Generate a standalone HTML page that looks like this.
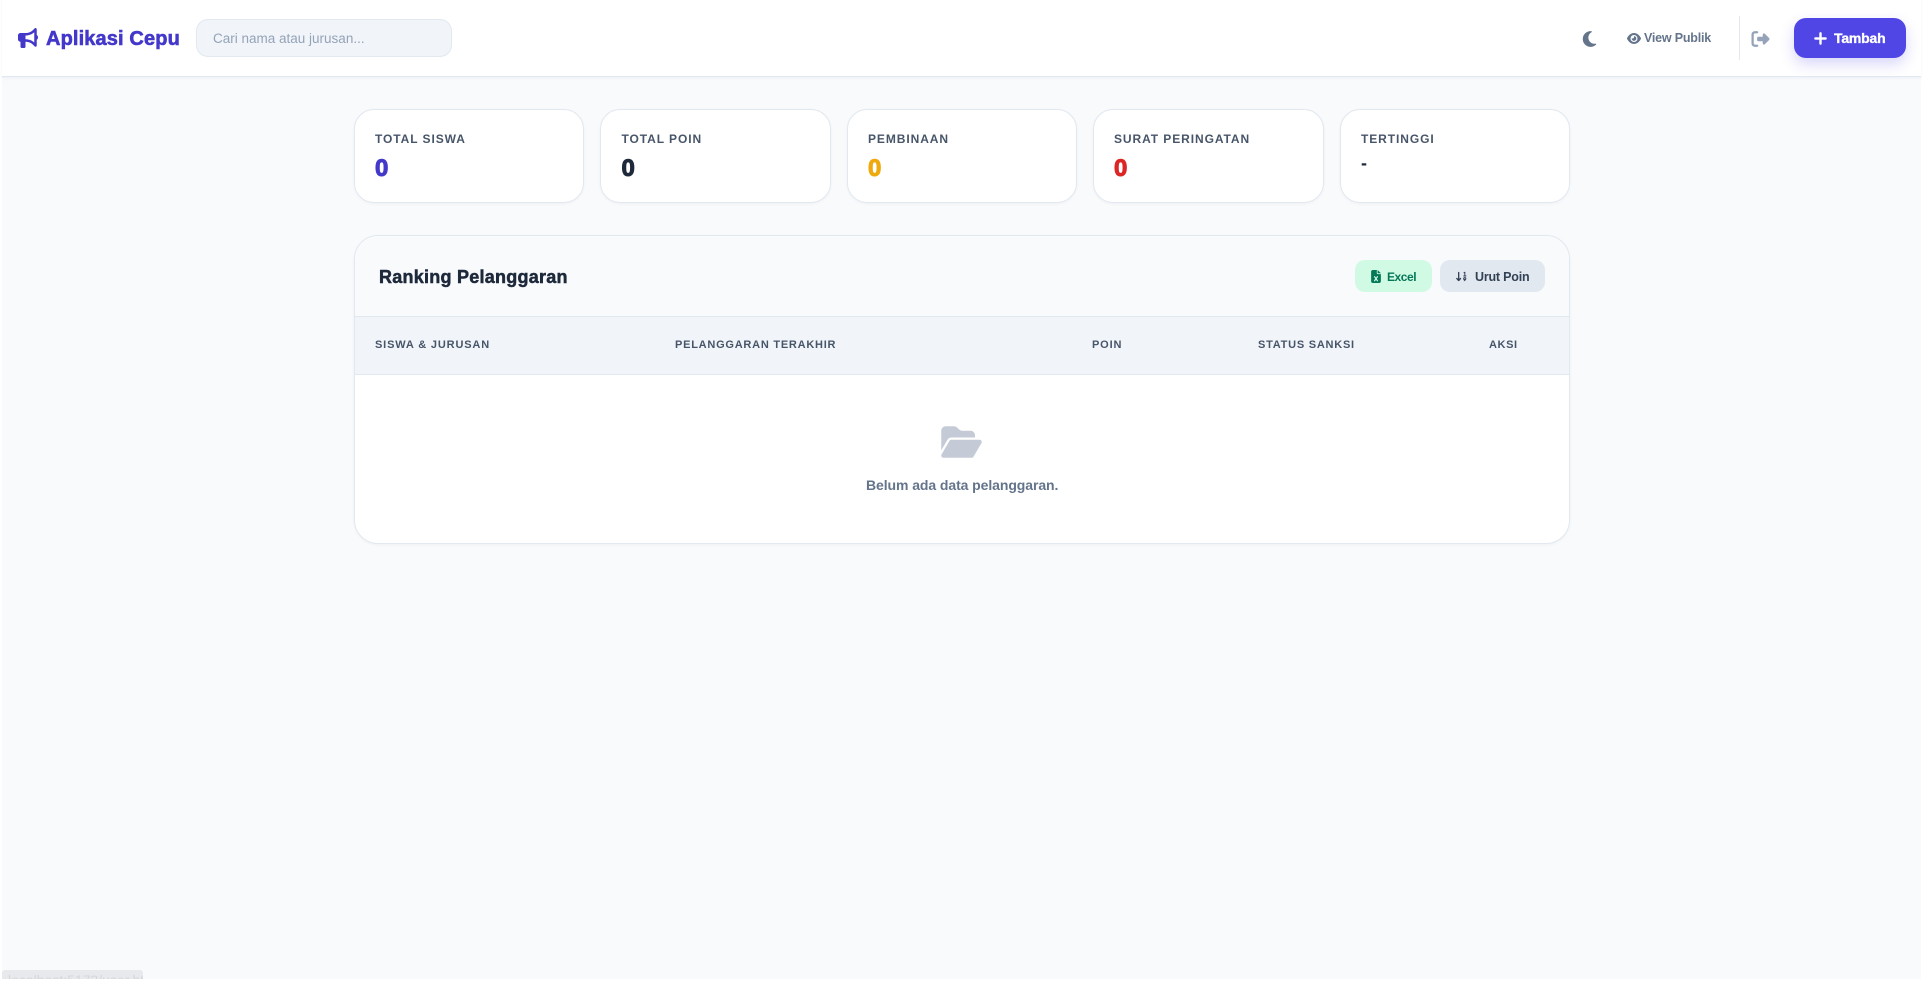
<!DOCTYPE html>
<html lang="id">
<head>
<meta charset="utf-8">
<title>Aplikasi Cepu</title>
<style>
html,body{margin:0;padding:0;background:#fff}
body{width:1923px;height:982px;position:relative;overflow:hidden;font-family:"Liberation Sans",sans-serif}
div,span,svg{position:absolute;box-sizing:border-box}
.t{white-space:nowrap;line-height:1}
#page{left:2px;top:0;width:1919px;height:979px;background:#f8fafc}
#nav{left:2px;top:0;width:1919px;height:77px;background:#fff;border-bottom:1px solid #e2e8f0;box-shadow:0 1px 2px rgba(226,232,240,.5)}
.card{top:109px;height:94px;background:#fff;border:1px solid #e2e8f0;border-radius:20px;box-shadow:0 1px 3px rgba(15,23,42,.04)}
.lb{top:133px;font-size:12px;font-weight:700;color:#475569;letter-spacing:.92px}
.val{top:157px;font-size:24px;font-weight:700;-webkit-text-stroke:1px currentColor}
.th{top:340px;font-size:11px;font-weight:700;color:#475569;letter-spacing:.85px}
</style>
</head>
<body>
<div id="page"></div>
<div id="nav"></div>

<svg style="left:18px;top:28px;width:20px;height:20px" viewBox="0 0 512 512" fill="#4338ca"><path d="M480 32c0-12.900-7.800-24.600-19.800-29.600s-25.700-2.200-34.900 6.900L381.700 53c-48 48-113.100 75-181 75H192 160 64c-35.300 0-64 28.700-64 64v96c0 35.300 28.700 64 64 64l0 128c0 17.700 14.300 32 32 32h64c17.700 0 32-14.300 32-32V352l8.700 0c67.900 0 133 27 181 75l43.600 43.600c9.200 9.200 22.900 11.900 34.900 6.900s19.800-16.600 19.800-29.600V300.400c18.600-8.800 32-32.500 32-60.400s-13.400-51.600-32-60.400V32zm-64 76.700V240 371.300C357.200 317.800 280.500 288 200.700 288H192V192h8.700c79.800 0 156.500-29.800 215.300-83.300z"/></svg>
<span class="t" style="left:46px;top:29px;font-size:20px;font-weight:700;color:#4338ca;-webkit-text-stroke:.6px #4338ca;letter-spacing:.13px">Aplikasi Cepu</span>

<div style="left:196px;top:19px;width:256px;height:38px;background:#f1f5f9;border:1px solid #e2e8f0;border-radius:12px"></div>
<span class="t" style="left:213px;top:31.500px;font-size:13.500px;color:#94a3b8">Cari nama atau jurusan...</span>

<svg style="left:1582px;top:30px;width:15px;height:18px" viewBox="0 0 384 512" fill="#64748b"><path d="M223.500 32C100 32 0 132.300 0 256S100 480 223.500 480c60.600 0 115.500-24.200 155.800-63.400c5-4.900 6.300-12.500 3.100-18.700s-10.100-9.700-17-8.500c-9.800 1.700-19.800 2.600-30.100 2.600c-96.900 0-175.500-78.800-175.500-176c0-65.800 36-123.100 89.300-153.300c6.100-3.500 9.200-10.500 7.700-17.300s-7.300-11.900-14.300-12.500c-6.300-.5-12.600-.8-19-.8z"/></svg>
<svg style="left:1627px;top:31.500px;width:14px;height:13px" viewBox="0 0 576 512" fill="#64748b"><path d="M288 32c-80.800 0-145.500 36.800-192.600 80.600C48.600 156 17.300 208 2.500 243.700c-3.300 7.900-3.300 16.700 0 24.600C17.300 304 48.600 356 95.400 399.400C142.500 443.200 207.200 480 288 480s145.500-36.800 192.600-80.600c46.800-43.500 78.100-95.400 93-131.100c3.300-7.900 3.300-16.700 0-24.600c-14.900-35.700-46.200-87.700-93-131.100C433.500 68.800 368.800 32 288 32zM144 256a144 144 0 1 1 288 0 144 144 0 1 1 -288 0zm144-64c0 35.300-28.700 64-64 64c-7.100 0-13.900-1.200-20.300-3.300c-5.500-1.800-11.900 1.600-11.700 7.400c.3 6.900 1.300 13.800 3.200 20.700c13.700 51.200 66.400 81.600 117.600 67.900s81.600-66.400 67.900-117.600c-11.100-41.500-47.800-69.400-88.600-71.100c-5.800-.2-9.200 6.100-7.400 11.700c2.100 6.400 3.300 13.200 3.300 20.300z"/></svg>
<span class="t" style="left:1644px;top:32px;font-size:12.500px;font-weight:700;color:#64748b;letter-spacing:-.2px">View Publik</span>
<div style="left:1739px;top:16px;width:1px;height:44px;background:#e2e8f0"></div>
<svg style="left:1751px;top:30px;width:19px;height:18px" viewBox="0 0 512 512" fill="#94a3b8"><path d="M377.900 105.900L500.700 228.700c7.200 7.200 11.300 17.100 11.300 27.300s-4.100 20.100-11.300 27.300L377.900 406.100c-6.400 6.400-15 9.900-24 9.900c-18.700 0-33.900-15.200-33.900-33.900l0-62.100-128 0c-17.700 0-32-14.300-32-32l0-64c0-17.700 14.300-32 32-32l128 0 0-62.100c0-18.700 15.200-33.900 33.900-33.900c9 0 17.600 3.600 24 9.900zM160 96L96 96c-17.700 0-32 14.300-32 32l0 256c0 17.700 14.300 32 32 32l64 0c17.700 0 32 14.300 32 32s-14.300 32-32 32l-64 0c-53 0-96-43-96-96L0 128C0 75 43 32 96 32l64 0c17.700 0 32 14.300 32 32s-14.300 32-32 32z"/></svg>
<div style="left:1794px;top:18px;width:112px;height:40px;background:#4f46e5;border-radius:12px;box-shadow:0 6px 14px rgba(79,70,229,.22)"></div>
<svg style="left:1814px;top:31px;width:13px;height:15px" viewBox="0 0 448 512" fill="#fff" stroke="#fff" stroke-width="20"><path d="M256 80c0-17.700-14.300-32-32-32s-32 14.300-32 32V224H48c-17.700 0-32 14.300-32 32s14.300 32 32 32H192V432c0 17.700 14.300 32 32 32s32-14.300 32-32V288H400c17.700 0 32-14.300 32-32s-14.300-32-32-32H256V80z"/></svg>
<span class="t" style="left:1834px;top:31px;font-size:14px;font-weight:700;color:#fff;letter-spacing:-.2px;-webkit-text-stroke:.3px #fff">Tambah</span>

<div class="card" style="left:354px;width:230px"></div>
<div class="card" style="left:600px;width:231px"></div>
<div class="card" style="left:847px;width:230px"></div>
<div class="card" style="left:1093px;width:231px"></div>
<div class="card" style="left:1340px;width:230px"></div>

<span class="t lb" style="left:375px">TOTAL SISWA</span>
<span class="t val" style="left:375px;color:#4338ca">0</span>
<span class="t lb" style="left:621.500px">TOTAL POIN</span>
<span class="t val" style="left:621.500px;color:#1e293b">0</span>
<span class="t lb" style="left:868px">PEMBINAAN</span>
<span class="t val" style="left:868px;color:#f0a90c">0</span>
<span class="t lb" style="left:1114px">SURAT PERINGATAN</span>
<span class="t val" style="left:1114px;color:#dc2626">0</span>
<span class="t lb" style="left:1361px">TERTINGGI</span>
<span class="t" style="left:1361px;top:154px;font-size:18px;font-weight:700;color:#1e293b">-</span>

<div style="left:354px;top:235px;width:1216px;height:309px;background:#fff;border:1px solid #e2e8f0;border-radius:24px;overflow:hidden;box-shadow:0 1px 3px rgba(15,23,42,.04)">
  <div style="left:0;top:0;width:100%;height:81px;background:#f8fafc;border-bottom:1px solid #e2e8f0"></div>
  <div style="left:0;top:81px;width:100%;height:58px;background:#f1f5f9;border-bottom:1px solid #e2e8f0"></div>
</div>

<span class="t" style="left:379px;top:268px;font-size:18px;font-weight:700;color:#1e293b;-webkit-text-stroke:.5px #1e293b;letter-spacing:.25px">Ranking Pelanggaran</span>

<div style="left:1355px;top:260px;width:77px;height:32px;background:#d1fae5;border-radius:10px"></div>
<svg style="left:1371px;top:270px;width:10px;height:13px" viewBox="0 0 384 512" fill="#047857"><path d="M64 0C28.700 0 0 28.700 0 64V448c0 35.300 28.700 64 64 64H320c35.300 0 64-28.700 64-64V160H256c-17.700 0-32-14.300-32-32V0H64zM256 0V128H384L256 0zM155.700 250.200L192 302.100l36.300-51.900c7.600-10.900 22.600-13.500 33.400-5.900s13.500 22.600 5.900 33.400L221.300 344l46.400 66.200c7.600 10.900 5 25.800-5.900 33.400s-25.800 5-33.400-5.900L192 385.800l-36.300 51.900c-7.600 10.900-22.600 13.500-33.400 5.900s-13.500-22.600-5.900-33.400L162.700 344l-46.400-66.200c-7.600-10.900-5-25.800 5.900-33.400s25.800-5 33.400 5.900z"/></svg>
<span class="t" style="left:1387px;top:270.500px;font-size:12px;font-weight:700;color:#047857;letter-spacing:-.45px">Excel</span>

<div style="left:1440px;top:260px;width:105px;height:32px;background:#e2e8f0;border-radius:10px"></div>
<svg style="left:1456px;top:270px;width:12px;height:13px" viewBox="0 0 576 512" fill="#334155"><path d="M151.600 469.600C145.500 476.200 137 480 128 480s-17.500-3.800-23.600-10.400l-88-96c-11.900-13-11.100-33.300 2-45.200s33.300-11.100 45.200 2L96 365.700V64c0-17.700 14.300-32 32-32s32 14.300 32 32V365.700l32.400-35.400c11.900-13 32.200-13.900 45.200-2s13.900 32.200 2 45.200l-88 96z"/><path d="M400 32h48v176h48v48H352v-48h48V96h-40V64z"/><path fill-rule="evenodd" d="M424 288a72 72 0 0 1 72 72c0 50-40 90-80 120h-60l50-48a72 72 0 1 1 18-144zm0 48a24 24 0 1 0 0 48 24 24 0 0 0 0-48z"/></svg>
<span class="t" style="left:1475px;top:270.500px;font-size:12.500px;font-weight:700;color:#334155;letter-spacing:-.2px">Urut Poin</span>

<span class="t th" style="left:375px">SISWA &amp; JURUSAN</span>
<span class="t th" style="left:675px;letter-spacing:.76px">PELANGGARAN TERAKHIR</span>
<span class="t th" style="left:1092px">POIN</span>
<span class="t th" style="left:1258px;letter-spacing:.76px">STATUS SANKSI</span>
<span class="t th" style="left:1489px;letter-spacing:.6px">AKSI</span>

<svg style="left:941px;top:424px;width:41px;height:36px" viewBox="0 0 576 512" fill="#c5cbd6"><path d="M88.700 223.800L0 375.800V96C0 60.700 28.700 32 64 32H181.500c17 0 33.300 6.700 45.300 18.700l26.500 26.500c12 12 28.300 18.700 45.300 18.700H416c35.300 0 64 28.700 64 64v32H144c-22.800 0-43.800 12.100-55.300 31.800zm27.600 16.100C122.100 230 132.600 224 144 224H544c11.500 0 22 6.100 27.700 16.100s5.700 22.200-.1 32.100l-112 192C453.900 474 443.400 480 432 480H32c-11.500 0-22-6.100-27.700-16.100s-5.700-22.200 .1-32.100l112-192z"/></svg>
<span class="t" style="left:866px;top:478px;font-size:14px;font-weight:700;color:#64748b;letter-spacing:-.08px">Belum ada data pelanggaran.</span>

<div style="left:2px;top:970px;width:141px;height:9px;background:#e8e9ec;border-radius:3px 3px 0 0;overflow:hidden">
  <span class="t" style="left:6px;top:2.500px;font-size:14px;color:#d5d6da">localhost:5173/user.html</span>
</div>
</body>
</html>
